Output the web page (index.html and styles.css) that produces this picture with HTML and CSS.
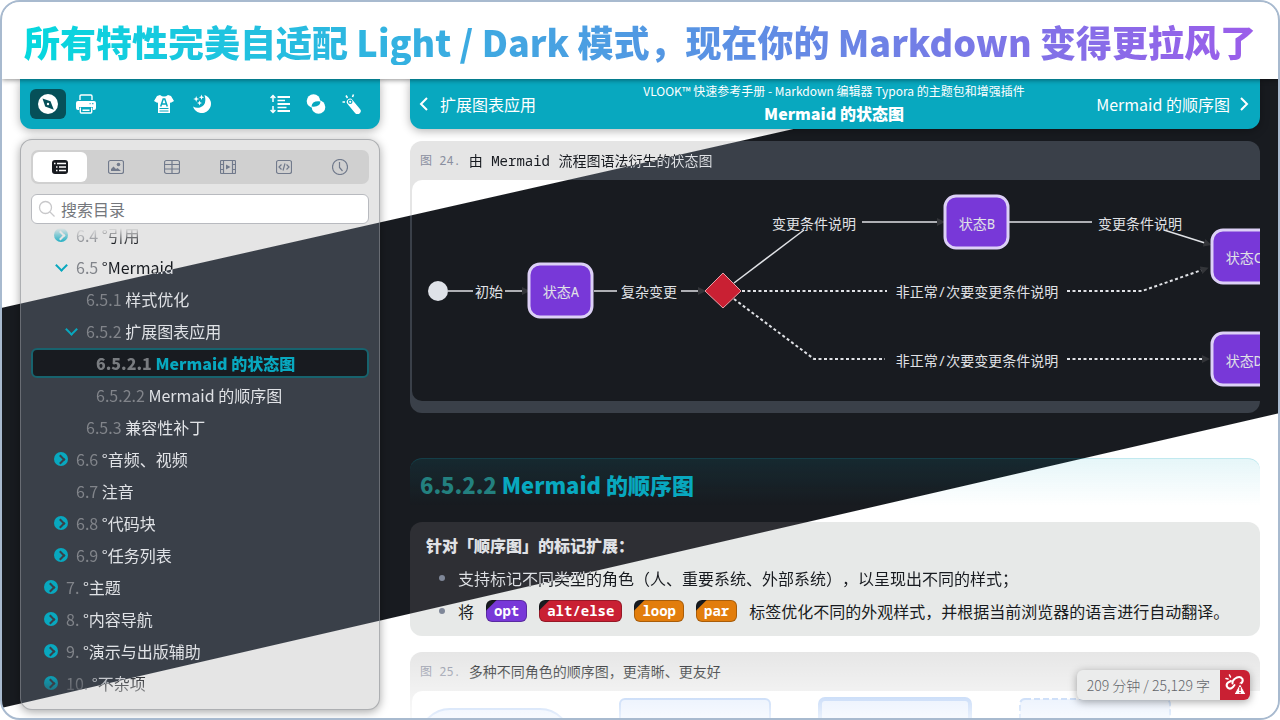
FILE: index.html
```html
<!DOCTYPE html>
<html lang="zh-CN">
<head>
<meta charset="utf-8">
<title>VLOOK™ Light / Dark</title>
<link rel="stylesheet" href="styles.css">
</head>
<body>
<div class="frame themed">
  <header class="banner"><h1 class="banner-title">所有特性完美自适配 Light / Dark 模式，现在你的 Markdown 变得更拉风了</h1></header>
  <div class="columns">
    <aside class="sidebar">
      <div class="toolbar">
        <div class="tool-group spaced">
          <button class="tool active" aria-label="导航"><svg width="20" height="20" viewBox="0 0 20 20"><circle cx="10" cy="10" r="10" fill="#fff"/><path d="M4.500 4.500 12.500 7.200 15.800 15.800 7.200 12.500Z" fill="#065059"/><circle cx="10" cy="10" r="1.200" fill="#fff"/></svg></button>
          <button class="tool" aria-label="打印"><svg width="20" height="20" viewBox="0 0 20 20"><path d="M4 6V2.2Q4 1 5.2 1H14.8Q16 1 16 2.2V6" fill="none" stroke="#fff" stroke-width="1.4"/><path d="M2 7H18Q20 7 20 9V14Q20 16 18 16H17V13H3V16H2Q0 16 0 14V9Q0 7 2 7Z" fill="#fff"/><path d="M13.5 9.7h1.2M16 9.7h1.5" stroke="#08a8bf"/><path d="M4.3 13.5V18Q4.3 19 5.3 19H14.7Q15.700 19 15.700 18V13.5M6.500 16.300H13.500" fill="none" stroke="#fff" stroke-width="1.400"/></svg></button>
        </div>
        <div class="tool-group spaced">
          <button class="tool" aria-label="字体风格"><svg width="20" height="20" viewBox="0 0 20 20"><path d="M6 1Q10 4 14 1L17 2 20 7 16.500 9 16 8V19H4V8L3.500 9 0 7 3 2Z" fill="#fff"/><path d="M6.700 12.500 9.200 5H10.800L13.300 12.500M7.700 10H12.300" fill="none" stroke="#08a8bf" stroke-width="1.500"/><path d="M5.500 14.500H14.500M5.500 17H14.500" stroke="#08a8bf"/></svg></button>
          <button class="tool" aria-label="颜色方案"><svg width="20" height="20" viewBox="0 0 20 20"><path d="M12.500 1A9.200 9.200 0 1 1 1 12.500Q4 14.500 8 13.500 15.500 10.500 12.500 1Z" fill="#fff"/><path d="M4.200 2l.8 2.200 2.200.8-2.200.8-.8 2.200-.8-2.200L1.200 5l2.200-.8ZM9.500 .5l.7 2 2 .7-2 .7-.7 2-.7-2-2-.7 2-.7ZM7.500 6.500l.7 1.800 1.800.7-1.800.7-.7 1.800-.7-1.800L5 9l1.800-.7Z" fill="#fff"/></svg></button>
        </div>
        <div class="tool-group">
          <button class="tool" aria-label="行距"><svg width="20" height="20" viewBox="0 0 20 20"><path d="M3 1.500V8M.6 4 3 1.500 5.400 4M3 12V18.500M.6 16 3 18.500 5.400 16" fill="none" stroke="#fff" stroke-width="1.500"/><path d="M7.500 3H20M7.500 10H20M7.500 17H20" stroke="#fff" stroke-width="1.900"/><path d="M7.500 6.500H15M7.500 13.500H16.500" stroke="#fff" stroke-width="1.500"/></svg></button>
          <button class="tool" aria-label="叠加"><svg width="20" height="20" viewBox="0 0 20 20"><circle cx="7.500" cy="7" r="6.800" fill="#fff"/><circle cx="12.500" cy="13" r="6.800" fill="#fff"/><path d="M5.500 12.500Q6 6.500 14.500 7.500 14 13.500 5.500 12.500Z" fill="#08a8bf"/></svg></button>
          <button class="tool" aria-label="聚光灯"><svg width="20" height="20" viewBox="0 0 20 20"><path d="M8 8 15.500 17" stroke="#fff" stroke-width="6.400" stroke-linecap="round"/><circle cx="8.200" cy="7.800" r="1.700" fill="none" stroke="#08a8bf" stroke-width="1.200"/><path d="M.5 8H3M4 1.500 5.500 4M11.500 .5 10.500 3" stroke="#fff" stroke-width="1.600"/></svg></button>
        </div>
      </div>
      <div class="panel themed surface">
        <div class="tabs">
          <button class="tab active" aria-label="目录"><svg width="16" height="16" viewBox="0 0 16 16"><rect y="1" width="16" height="14" rx="3" fill="#181b20"/><path d="M5 4.500H14M7 8H14M7 11.500H14" stroke="#fff" stroke-width="1.300"/><path d="M2 4.500H3.500M4 8H5.500M4 11.500H5.500" stroke="#fff" stroke-width="1.300"/></svg></button>
          <button class="tab" aria-label="图片"><svg width="16" height="16" viewBox="0 0 16 16"><rect x=".5" y="1.500" width="15" height="13" rx="2" class="line"/><path d="M3 12V10L5.500 7.500 8 10 9.500 9 13 12Z" fill="#717a8c"/><circle cx="10.500" cy="5.500" r="1.800" fill="#717a8c"/></svg></button>
          <button class="tab" aria-label="表格"><svg width="16" height="16" viewBox="0 0 16 16"><rect x=".5" y="1.500" width="15" height="13" rx="2" class="line"/><path d="M.5 5.500H15.500M.5 10H15.500M8 1.500V14.500" class="line"/></svg></button>
          <button class="tab" aria-label="视频"><svg width="16" height="16" viewBox="0 0 16 16"><rect x=".5" y="1.500" width="15" height="13" rx="1" class="line"/><path d="M3.500 1.500V14.500M12.500 1.500V14.500M.5 5.500H3.500M.5 10.500H3.500M12.500 5.500H15.500M12.500 10.500H15.500" class="line"/><path d="M6 5.500 10.500 8 6 10.500Z" fill="#717a8c"/></svg></button>
          <button class="tab" aria-label="代码"><svg width="16" height="16" viewBox="0 0 16 16"><rect x=".5" y="1.500" width="15" height="13" rx="2" class="line"/><path d="M5.500 5.500 3 8 5.500 10.500M10.500 5.500 13 8 10.500 10.500M9 4.500 7 11.500" class="line"/></svg></button>
          <button class="tab" aria-label="历史"><svg width="16" height="16" viewBox="0 0 16 16"><circle cx="8" cy="8" r="7.500" class="line"/><path d="M7.500 3V8.500L10.500 12" class="line"/></svg></button>
        </div>
        <label class="search"><svg width="18" height="18" viewBox="0 0 18 18"><circle cx="7.500" cy="7.500" r="6" fill="none" stroke="#c8c8ca" stroke-width="1.300"/><path d="M12 12 16.500 16.500" stroke="#c8c8ca" stroke-width="1.300"/></svg><input type="text" placeholder="搜索目录" aria-label="搜索目录"></label>
        <ul class="tree">
          <li class="l2"><i class="fold"></i><a href="#"><span class="num">6.4</span> <span class="on-light">°引用</span></a></li>
          <li class="l2"><i class="open"></i><a href="#"><span class="num">6.5</span> <span class="split">°Mermaid</span></a></li>
          <li class="l3"><i></i><a href="#"><span class="num">6.5.1</span> 样式优化</a></li>
          <li class="l3"><i class="open"></i><a href="#"><span class="num">6.5.2</span> 扩展图表应用</a></li>
          <li class="l4 current"><i></i><a href="#"><span class="num">6.5.2.1</span> Mermaid 的状态图</a></li>
          <li class="l4"><i></i><a href="#"><span class="num">6.5.2.2</span> Mermaid 的顺序图</a></li>
          <li class="l3"><i></i><a href="#"><span class="num">6.5.3</span> 兼容性补丁</a></li>
          <li class="l2"><i class="fold"></i><a href="#"><span class="num">6.6</span> °音频、视频</a></li>
          <li class="l2"><i></i><a href="#"><span class="num">6.7</span> 注音</a></li>
          <li class="l2"><i class="fold"></i><a href="#"><span class="num">6.8</span> °代码块</a></li>
          <li class="l2"><i class="fold"></i><a href="#"><span class="num">6.9</span> °任务列表</a></li>
          <li class="l1"><i class="fold"></i><a href="#"><span class="num">7.</span> °主题</a></li>
          <li class="l1"><i class="fold"></i><a href="#"><span class="num">8.</span> °内容导航</a></li>
          <li class="l1"><i class="fold"></i><a href="#"><span class="num">9.</span> °演示与出版辅助</a></li>
          <li class="l1"><i class="fold"></i><a href="#"><span class="num">10.</span> <span class="split">°不杂项</span></a></li>
        </ul>
      </div>
    </aside>
    <main class="doc">
      <nav class="pager">
        <a class="prev" href="#"><svg width="10" height="16" viewBox="0 0 10 16"><path d="M8 2 2 8 8 14" fill="none" stroke="#fff" stroke-width="2"/></svg>扩展图表应用</a>
        <div class="place"><small>VLOOK™ 快速参考手册 - Markdown 编辑器 Typora 的主题包和增强插件</small><strong>Mermaid 的状态图</strong></div>
        <a class="next" href="#">Mermaid 的顺序图<svg width="10" height="16" viewBox="0 0 10 16"><path d="M2 2 8 8 2 14" fill="none" stroke="#fff" stroke-width="2"/></svg></a>
      </nav>
      <figure class="figure themed surface first">
        <figcaption><span class="fig-no">图 24.</span><span class="split">由 Mermaid 流程图语法衍生的状态图</span></figcaption>
        <div class="canvas themed">
          <svg class="chart" width="900" height="221">
            <defs><marker id="arrow" markerUnits="userSpaceOnUse" markerWidth="8" markerHeight="10" refX="1" refY="5" orient="auto"><path d="M0 1 8 5 0 9Z" fill="#333539"/></marker></defs>
            <circle cx="26" cy="111" r="10" fill="#dfe2e8"/>
            <g class="edge">
              <path d="M36 111H61"/><path d="M93 111H111" marker-end="url(#arrow)"/>
              <path d="M182 111H205"/><path d="M269 111H287" marker-end="url(#arrow)"/>
              <path d="M322 103 392 50"/><path d="M450 42H526" marker-end="url(#arrow)"/>
              <path d="M597 42H680"/><path d="M752 50 793 63" marker-end="url(#arrow)"/>
            </g>
            <g class="edge dotted">
              <path d="M330 111H475"/><path d="M655 111H730L790 90" marker-end="url(#arrow)"/>
              <path d="M322 119 402 179H473"/><path d="M655 179H791" marker-end="url(#arrow)"/>
            </g>
            <path d="M311 93 329 111 311 128 293 111Z" fill="#c92033" stroke="#e8a0a8"/>
            <g fill="#7838d8" stroke="#dcd0f6" stroke-width="3">
              <rect x="117" y="84" width="63" height="53" rx="11"/>
              <rect x="533" y="16" width="63" height="52" rx="11"/>
              <rect x="800" y="50" width="63" height="53" rx="11"/>
              <rect x="800" y="153" width="63" height="52" rx="11"/>
            </g>
            <g class="label">
              <text x="77" y="117">初始</text><text x="149" y="117">状态A</text><text x="237" y="117">复杂变更</text>
              <text x="402" y="49">变更条件说明</text><text x="565" y="49">状态B</text><text x="728" y="49">变更条件说明</text>
              <text x="565" y="117">非正常/次要变更条件说明</text><text x="565" y="186">非正常/次要变更条件说明</text>
              <text x="832" y="83">状态C</text><text x="832" y="186">状态D</text>
            </g>
          </svg>
        </div>
      </figure>
      <h2 class="section-title"><span>6.5.2.2</span> Mermaid 的顺序图</h2>
      <section class="quote themed">
        <h3>针对「顺序图」的标记扩展：</h3>
        <ul>
          <li><span class="split">支持标记不同类型的角色（人、重要系统、外部系统），以呈现出不同的样式；</span></li>
          <li><span>将</span><code class="tag purple">opt</code><code class="tag red">alt/else</code><code class="tag orange">loop</code><code class="tag orange">par</code><span>标签优化不同的外观样式，并根据当前浏览器的语言进行自动翻译。</span></li>
        </ul>
      </section>
      <figure class="figure themed surface">
        <figcaption><span class="fig-no">图 25.</span><span>多种不同角色的顺序图，更清晰、更友好</span></figcaption>
        <div class="canvas themed">
          <svg class="chart" width="900" height="60" fill="#d5e4fb" stroke="#8db5f0" stroke-width="2">
            <rect x="8" y="18" width="150" height="60" rx="30"/>
            <rect x="208" y="8" width="150" height="60" rx="5"/>
            <rect x="408" y="8" width="150" height="60" rx="5" stroke-width="4"/>
            <rect x="608" y="8" width="150" height="60" rx="5" stroke-dasharray="6 3"/>
          </svg>
        </div>
      </figure>
    </main>
  </div>
  <div class="status"><span>209 分钟 / 25,129 字</span><button aria-label="链接错误"><svg width="22" height="22" viewBox="0 0 22 22"><g fill="none" stroke="#fff" stroke-width="2" stroke-linecap="round"><path d="M7 7 4 8.500Q1.500 11 3.500 13.500 6 16 9 13L10.500 11"/><path d="M8.500 9.500Q8 7 10.500 5L13 3.500Q16.500 2 18.500 5 19.500 8 16.500 9.500"/><path d="M2 4.500 4 5M5.500 1 6.500 3" stroke-width="1.500"/></g><path d="M16 9.500 22 20.500H10Z" fill="#fff" stroke="#c92033"/><path d="M16 13V17M16 18V19.300" stroke="#c92033" stroke-width="1.500"/></svg></button></div>
</div>
</body>
</html>
```
FILE: styles.css
```css
* { box-sizing: border-box; }
:root {
  --teal: #08a8bf;
  --ink: #181b20;
  --pale: #e0e2e6;
  --mono: "Noto Sans Mono", "DejaVu Sans Mono", "Noto Sans CJK SC", monospace;
}
body { margin: 0; background: #fff; color: var(--ink); font: 16px/24px "Noto Sans CJK SC", sans-serif; text-spacing-trim: space-all; }
h1, h2, h3, ul, figure { margin: 0; padding: 0; }
ul { list-style: none; }
a { color: inherit; text-decoration: none; }
button { border: 0; padding: 0; background: none; display: flex; align-items: center; justify-content: center; }

/* A dark diagonal band crosses the window; everything themed shares it. */
.themed, .split {
  --light: #fff;
  --dark: #181b20;
  background-color: var(--dark);
  background-image:
    linear-gradient(167.27deg, var(--light) calc(50% - 192px), transparent calc(50% - 191px)),
    linear-gradient(167.01deg, transparent calc(50% + 195px), var(--light) calc(50% + 196px));
  background-attachment: fixed;
}
.surface { --light: #e5e5e5; --dark: #3a4049; }
.split {
  --light: #181b20;
  --dark: #e0e2e6;
  -webkit-background-clip: text;
  background-clip: text;
  -webkit-text-fill-color: transparent;
}

.frame { position: relative; height: 100vh; display: flex; flex-direction: column; overflow: hidden; border: 2px solid #a8bacf; border-radius: 20px; }
.frame::after { content: ""; position: absolute; inset: auto 0 0 390px; height: 70px; background: linear-gradient(rgba(255,255,255,0), rgba(255,255,255,.8)); pointer-events: none; }
.banner { position: relative; z-index: 2; background: #fff; padding: 15px 20px 14px; text-align: center; box-shadow: 0 1px 5px rgba(0,0,0,.45); }
.banner-title { display: inline-block; font-size: 36px; line-height: 48px; font-weight: 900; white-space: nowrap; background: linear-gradient(90deg, #06d8de, #4a9fe2 45%, #9b5dea); -webkit-background-clip: text; background-clip: text; color: transparent; }

.columns { flex: 1; min-height: 0; display: grid; grid-template-columns: 360px minmax(0, 1fr); gap: 30px; padding: 0 18px; }
.sidebar { display: flex; flex-direction: column; gap: 10px; min-height: 0; padding-bottom: 8px; }
.toolbar, .pager { background: var(--teal); border-radius: 0 0 12px 12px; box-shadow: 0 2px 10px rgba(0,0,0,.3); height: 50px; }
.toolbar { display: flex; justify-content: space-between; align-items: center; padding: 0 10px; }
.tool-group { display: flex; }
.spaced { gap: 2px; }
.tool { width: 36px; height: 30px; border-radius: 6px; }
.tool.active { background: #065059; }

.panel { flex: 1; min-height: 0; display: flex; flex-direction: column; padding: 10px; border: 1px solid rgba(135,138,144,.6); border-radius: 12px; background-clip: border-box; background-origin: border-box; box-shadow: 0 2px 10px rgba(0,0,0,.35); }
.tabs { display: flex; gap: 2px; padding: 2px; border-radius: 7px; background: #d0d0d0; }
.tab { flex: 1; height: 30px; border-radius: 6px; }
.tab.active { background: #fff; }
.line { fill: none; stroke: #717a8c; stroke-width: 1.2; }
.search { display: flex; align-items: center; gap: 5px; height: 30px; margin-top: 10px; padding: 0 6px; background: #fff; border: 1px solid #b8babf; border-radius: 6px; }
.search input { flex: 1; min-width: 0; border: 0; padding: 0; outline: 0; background: none; font: inherit; }
.search input::placeholder { color: #74777c; }

.tree { flex: 1; min-height: 0; margin-top: -4px; display: flex; flex-direction: column; gap: 2px; overflow: hidden; color: var(--pale); -webkit-mask-image: linear-gradient(transparent 8px, #000 24px, #000 calc(100% - 26px), transparent calc(100% + 10px)); mask-image: linear-gradient(transparent 8px, #000 24px, #000 calc(100% - 26px), transparent calc(100% + 10px)); }
.tree li { flex: none; display: flex; align-items: center; gap: 8px; height: 30px; border-radius: 6px; }
.tree .l1 { padding-left: 13px; }
.tree .l2 { padding-left: 23px; }
.tree .l3 { padding-left: 33px; }
.tree .l4 { padding-left: 43px; }
.tree .current { padding-left: 41px; border: 2px solid #17636e; background: #181b20; color: var(--teal); font-weight: 900; }
.tree i { display: flex; align-items: center; justify-content: center; width: 14px; height: 14px; border-radius: 50%; }
.tree .fold { background: var(--teal); }
.tree .fold::before { content: ""; width: 5px; height: 5px; margin-left: -2px; border: solid #3a4049; border-width: 2px 2px 0 0; rotate: 45deg; box-sizing: content-box; }
.tree li:first-child .fold::before { border-color: #e5e5e5; }
.tree .open::before { content: ""; width: 7px; height: 7px; margin-top: -4px; border: solid var(--teal); border-width: 0 2px 2px 0; rotate: 45deg; box-sizing: content-box; }
.num { color: #81848a; }
.current .num { color: #797c80; }
.on-light { color: var(--ink); }

.doc { min-height: 0; overflow: visible; }
.pager { display: grid; grid-template-columns: 1fr auto 1fr; align-items: center; padding: 0 11px 0 9px; color: #fff; }
.prev, .next { display: flex; align-items: center; gap: 11px; }
.next { justify-content: flex-end; gap: 9px; }
.place { padding-bottom: 5px; text-align: center; }
.place small, .place strong { display: block; font-size: 12px; line-height: 22px; }
.place strong { font-size: 16px; font-weight: 900; }

.figure { margin-top: 16px; padding: 0 0 12px 2px; border-radius: 12px; overflow: hidden; }
.figure.first { margin-top: 12px; }
.figure figcaption { display: flex; align-items: center; gap: 8px; height: 39px; padding-left: 8px; font: 14px/20px var(--mono); }
.fig-no { font-size: 12px; color: #8a8fa0; }
.canvas { border-radius: 10px 0 0 10px; overflow: hidden; }
.chart { display: block; }
.edge path { fill: none; stroke: var(--pale); stroke-width: 1.5; }
.edge.dotted path { stroke-width: 2; stroke-dasharray: 3 2.5; }
.label text { fill: var(--pale); text-anchor: middle; font: 14px var(--mono); }

.section-title { margin-top: 45px; padding: 9px 10px 6px; border-top: 1px solid rgba(8,168,191,.25); border-radius: 12px 12px 0 0; background: linear-gradient(rgba(8,168,191,.1), transparent); font-size: 22px; line-height: 32px; font-weight: 900; color: var(--teal); }
.section-title span { color: #23807f; }

.quote { --light: #e7e9e8; --dark: #2e2f34; margin-top: 16px; padding: 7px 16px 9px; border-radius: 12px; }
.quote h3 { font-size: 16px; line-height: 32px; font-weight: 900; color: var(--pale); }
.quote li { display: flex; align-items: center; gap: 12px; min-height: 33px; padding-left: 16px; }
.quote li::before { content: ""; width: 6px; height: 6px; margin: 0 1px 0 -3px; border-radius: 50%; background: #7f8798; }
.tag { padding: 0 7px; border: 1px solid rgba(0,0,0,.25); border-radius: 6px; font: 700 14px/20px var(--mono); color: #fff; background-image: linear-gradient(135deg, #181b20 7px, transparent 8px); background-origin: border-box; }
.purple { background-color: #7838d8; }
.red { background-color: #c92033; }
.orange { background-color: #e27d0c; }

.status { position: absolute; z-index: 3; right: 28px; bottom: 18px; display: flex; align-items: center; height: 30px; border-radius: 6px; overflow: hidden; background: #ebecec; box-shadow: 0 2px 8px rgba(0,0,0,.35); font-size: 14px; font-weight: 300; color: #63666b; }
.status span { padding: 0 10px; }
.status button { width: 30px; height: 30px; background: #c92033; }
```
